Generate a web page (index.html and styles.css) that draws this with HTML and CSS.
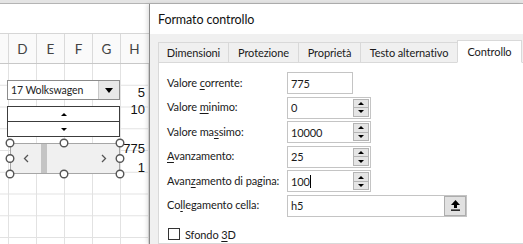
FILE: index.html
```html
<!DOCTYPE html>
<html lang="it">
<head>
  <meta charset="UTF-8">
  <title>Formato controllo</title>
  <link rel="stylesheet" href="styles.css">
</head>
<body>
  <div class="topstrip"></div>
  <div class="main">

    <!-- foglio di lavoro -->
    <div class="sheet">
      <div class="formula"></div>
      <div class="colheads">
        <span>D</span><span>E</span><span>F</span><span>G</span><span>H</span>
      </div>
      <div class="cells">
        <div class="controls">
          <div class="combo">
            <span class="combo-text">17 Wolkswagen</span>
            <span class="combo-btn"><span class="tri-down big"></span></span>
          </div>
          <div class="spinner">
            <div class="spin-half"><span class="tri-up"></span></div>
            <div class="spin-half"><span class="tri-down"></span></div>
          </div>
          <div class="scroll-wrap">
            <div class="scrollbar">
              <svg class="chev" width="6" height="9" viewBox="0 0 6 9"><polyline points="5,1 1.5,4.5 5,8" /></svg>
              <div class="thumb"></div>
              <div class="fill"></div>
              <svg class="chev" width="6" height="9" viewBox="0 0 6 9"><polyline points="1,1 4.5,4.5 1,8" /></svg>
            </div>
            <!-- maniglie di selezione -->
            <svg class="handles" width="120" height="41" viewBox="0 0 120 41">
              <circle cx="5" cy="5" r="3.8" /><circle cx="59" cy="5" r="3.8" /><circle cx="115" cy="5" r="3.8" />
              <circle cx="5" cy="20.5" r="3.8" /><circle cx="115" cy="20.5" r="3.8" />
              <circle cx="5" cy="36" r="3.8" /><circle cx="59" cy="36" r="3.8" /><circle cx="115" cy="36" r="3.8" />
            </svg>
          </div>
        </div>
        <div class="values">
          <div class="val first">5</div>
          <div class="val">10</div>
          <div class="val gap">775</div>
          <div class="val near">1</div>
        </div>
      </div>
    </div>

    <!-- finestra di dialogo -->
    <div class="dialog">
      <div class="dialog-title">Formato controllo</div>
      <div class="dialog-body">
        <div class="tabs">
          <div class="tab" style="width: 70px">Dimensioni</div>
          <div class="tab" style="width: 70px">Protezione</div>
          <div class="tab" style="width: 62px">Proprietà</div>
          <div class="tab" style="width: 97px">Testo alternativo</div>
          <div class="tab active" style="width: 65px">Controllo</div>
        </div>
        <div class="panel">
          <div class="form">
            <label>Valore <u>c</u>orrente:</label>
            <div class="field short">775</div>

            <label>Valore <u>m</u>inimo:</label>
            <div class="field spin">0<span class="spin-btns"><span class="sb"><span class="tri-up"></span></span><span class="sb"><span class="tri-down"></span></span></span></div>

            <label>Valore ma<u>s</u>simo:</label>
            <div class="field spin">10000<span class="spin-btns"><span class="sb"><span class="tri-up"></span></span><span class="sb"><span class="tri-down"></span></span></span></div>

            <label><u>A</u>vanzamento:</label>
            <div class="field spin">25<span class="spin-btns"><span class="sb"><span class="tri-up"></span></span><span class="sb"><span class="tri-down"></span></span></span></div>

            <label>Avan<u>z</u>amento di pagina:</label>
            <div class="field spin">100<span class="caret"></span><span class="spin-btns"><span class="sb"><span class="tri-up"></span></span><span class="sb"><span class="tri-down"></span></span></span></div>

            <label>Co<u>l</u>legamento cella:</label>
            <div class="field link">h5<span class="pick">
              <svg width="11" height="13" viewBox="0 0 11 13"><polygon points="5.5,1 10,6 1,6" /><rect x="4" y="5" width="3" height="4" /><rect x="1" y="10.5" width="9" height="1.3" /></svg>
            </span></div>
          </div>
          <div class="check-row">
            <span class="checkbox"></span>
            <span>Sfondo <u>3</u>D</span>
          </div>
        </div>
      </div>
    </div>

  </div>
</body>
</html>
```

FILE: styles.css
```css
body {
  margin: 0;
  width: 523px;
  height: 244px;
  overflow: hidden;
  font-family: Lato, "Open Sans", sans-serif;
  font-size: 11px;
  letter-spacing: -0.1px;
  color: #1a1a1a;
  background: #fff;
}
.topstrip {
  height: 3px;
  background: #e4e4e4;
  border-bottom: 1px solid #b4b4b4;
}
.main {
  display: flex;
  height: 240px;
}

/* foglio */
.sheet {
  width: 149px;
  display: flex;
  flex-direction: column;
}
.formula {
  height: 29px;
  border-bottom: 1px solid #d6d6d6;
}
.colheads {
  height: 29px;
  display: flex;
  padding-left: 8px;
  background: #fafafa;
  border-bottom: 1px solid #c8c8c8;
}
.colheads span {
  width: 28px;
  box-sizing: border-box;
  border-left: 1px solid #dadada;
  display: flex;
  align-items: center;
  justify-content: center;
  font-size: 13.5px;
  letter-spacing: 0;
  color: #444;
}
.cells {
  flex: 1;
  display: flex;
  background-image:
    linear-gradient(to right, #e2e2e2 1px, transparent 1px),
    linear-gradient(to bottom, transparent 20.75px, #e2e2e2 20.75px);
  background-size: 28px 100%, 100% 21.75px;
  background-position: 8px 0, 0 0;
}
.controls {
  width: 113px;
  margin-left: 7px;
  padding-top: 16px;
}
.combo {
  height: 20px;
  box-sizing: border-box;
  border: 1px solid #8c8c8c;
  background: #fff;
  display: flex;
  align-items: center;
}
.combo-text {
  flex: 1;
  padding-left: 3px;
  font-size: 10.5px;
  color: #222;
}
.combo-btn {
  width: 20px;
  height: 18px;
  background: #e8e8e8;
  border-left: 1px solid #c8c8c8;
  display: flex;
  align-items: center;
  justify-content: center;
}
.tri-up, .tri-down {
  width: 0;
  height: 0;
  border-left: 3px solid transparent;
  border-right: 3px solid transparent;
}
.tri-up { border-bottom: 3px solid #000; }
.tri-down { border-top: 3px solid #000; }
.tri-down.big {
  border-left-width: 4.5px;
  border-right-width: 4.5px;
  border-top-width: 5px;
}
.spinner {
  margin-top: 6px;
  height: 31px;
  box-sizing: border-box;
  border: 1px solid #3c3c3c;
  background: #fff;
  display: flex;
  flex-direction: column;
}
.spin-half {
  flex: 1;
  display: flex;
  align-items: center;
  justify-content: center;
}
.spin-half + .spin-half { border-top: 1px solid #3c3c3c; }
.scroll-wrap {
  margin-top: 6px;
  margin-left: 3px;
  position: relative;
}
.scrollbar {
  height: 31px;
  box-sizing: border-box;
  border: 1px solid #a6a6a6;
  background: #f0f0f0;
  display: flex;
  align-items: center;
}
.chev {
  fill: none;
  stroke: #555;
  stroke-width: 1.3;
  margin: 0 12px;
  flex-shrink: 0;
}
.thumb {
  flex: 0 0 6px;
  align-self: stretch;
  background: #c4c4c4;
}
.fill { flex: 1; }
.handles {
  position: absolute;
  left: -5px;
  top: -5px;
  fill: #fff;
  stroke: #555;
  stroke-width: 1.4;
}
.values {
  width: 28px;
  padding-right: 3px;
  box-sizing: border-box;
  text-align: right;
  font-family: "Liberation Sans", sans-serif;
  font-size: 13px;
  letter-spacing: 0;
  line-height: 17px;
  color: #111;
}
.val.first { margin-top: 19.5px; }
.val.gap { margin-top: 22px; }
.val.near { margin-top: 2px; }

/* dialogo */
.dialog {
  flex: 1;
  border-left: 1px solid #8a8a8a;
  box-shadow: -2px 0 4px rgba(0,0,0,0.12);
  display: flex;
  flex-direction: column;
}
.dialog-title {
  height: 30px;
  padding-left: 8px;
  display: flex;
  align-items: center;
  font-size: 12.5px;
  color: #111;
  background: #fff;
}
.dialog-body {
  flex: 1;
  background: #f0f0f0;
  padding: 9px 0 0 8px;
  display: flex;
  flex-direction: column;
}
.tabs {
  display: flex;
  align-items: flex-end;
  height: 20px;
  margin-bottom: -1px;
}
.tab {
  height: 21px;
  box-sizing: border-box;
  border: 1px solid #d9d9d9;
  border-right: none;
  display: flex;
  align-items: center;
  justify-content: center;
  background: #f0f0f0;
  color: #1a1a1a;
}
.tab.active {
  height: 23px;
  background: #fff;
  border-right: 1px solid #d9d9d9;
  border-bottom-color: #fff;
  position: relative;
}
.panel {
  flex: 1;
  background: #fff;
  border: 1px solid #d9d9d9;
  border-right: none;
  padding: 9px 0 0 8px;
}
.form {
  display: grid;
  grid-template-columns: 120px auto;
  grid-auto-rows: 22px;
  row-gap: 2.6px;
  align-items: center;
}
.form label {
  margin-top: -2px;
}
.field {
  height: 22px;
  box-sizing: border-box;
  border: 1px solid #c4c4c4;
  display: flex;
  align-items: center;
  padding-left: 3px;
  background: #fff;
}
.field.short { width: 66px; }
.field.spin { width: 84px; }
.field.link { width: 180px; }
.caret {
  width: 1px;
  height: 13px;
  background: #000;
}
.spin-btns {
  margin-left: auto;
  margin-right: 1px;
  width: 16px;
  height: 18px;
  display: flex;
  flex-direction: column;
}
.sb {
  flex: 1;
  box-sizing: border-box;
  border: 1px solid #b4b4b4;
  background: #e5e5e5;
  display: flex;
  align-items: center;
  justify-content: center;
}
.sb + .sb { border-top: none; }
.pick {
  margin-left: auto;
  width: 22px;
  height: 20px;
  box-sizing: border-box;
  border: 1px solid #adadad;
  background: #e1e1e1;
  display: flex;
  align-items: center;
  justify-content: center;
}
.pick svg { fill: #000; }
.check-row {
  margin-top: 11px;
  margin-left: 1px;
  display: flex;
  align-items: center;
  gap: 5px;
}
.checkbox {
  width: 12px;
  height: 12px;
  box-sizing: border-box;
  border: 1px solid #333;
  background: #fff;
}
u {
  text-decoration-thickness: 1px;
  text-underline-offset: 2px;
}
```
